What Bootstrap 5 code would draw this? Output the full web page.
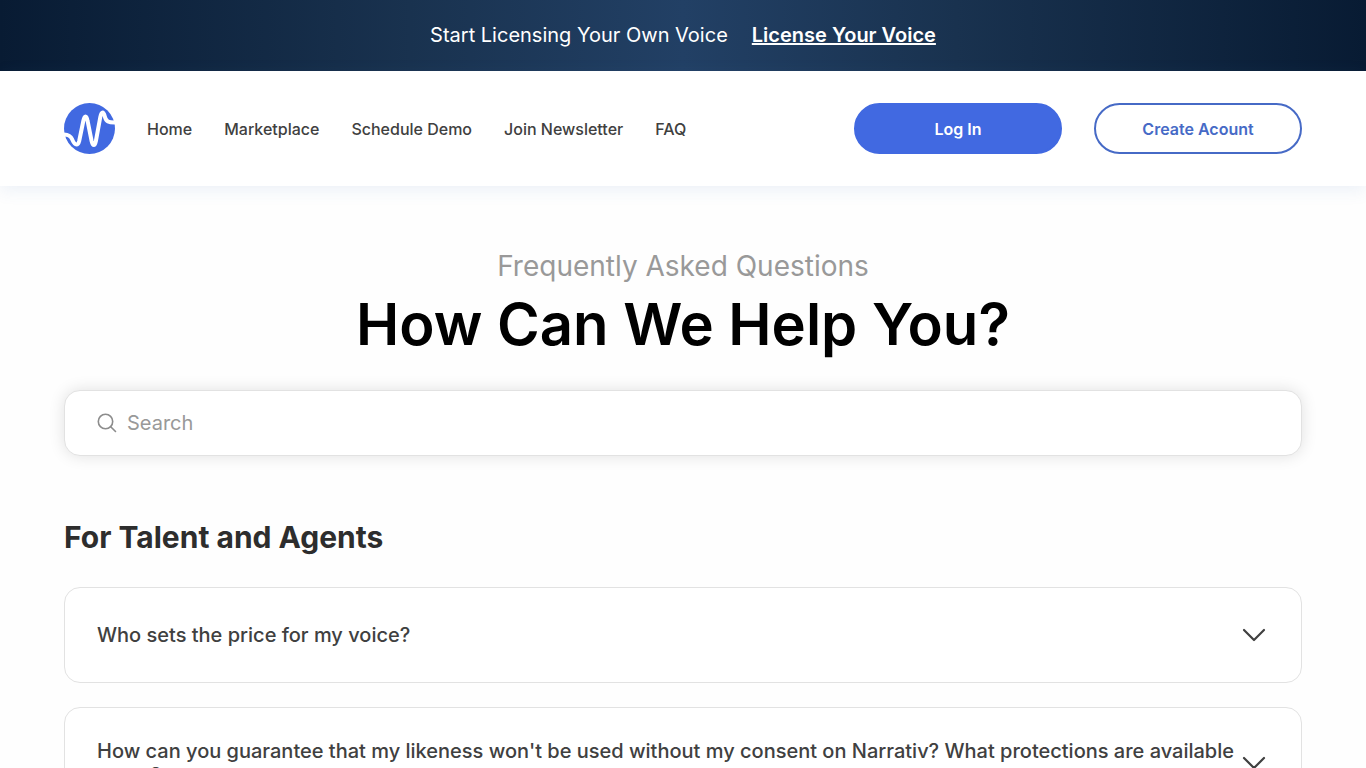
<!DOCTYPE html>
<html lang="en">
<head>
<meta charset="utf-8">
<meta name="viewport" content="width=device-width, initial-scale=1">
<title>Narrativ – FAQ</title>
<link href="https://cdn.jsdelivr.net/npm/bootstrap@5.3.0/dist/css/bootstrap.min.css" rel="stylesheet">
<style>
  body { font-family: Inter, "Liberation Sans", sans-serif; color: #404040; background: #fefefe; }
  .page-gutter { padding-left: 64px; padding-right: 64px; }
  .promo { background: linear-gradient(90deg, #081b33 0%, #19324f 30%, #224065 50%, #19324f 70%, #081b33 100%); padding: 23px 0 24px; font-size: 20px; line-height: 24px; }
  .site-header { background: #fff; padding-top: 32px; padding-bottom: 32px; box-shadow: 0 4px 16px rgba(65, 120, 190, .1); }
  .header-group { gap: 32px; }
  .site-header .nav-link { color: #404040; font-weight: 500; font-size: 16px; padding: 0; }
  .brand-logo { display: block; }
  .btn-pill { width: 208px; height: 51px; border: 2px solid #4169e1; border-radius: 26px; font-size: 16px; font-weight: 600; }
  .btn-login, .btn-login:hover { background: #4169e1; color: #fff; border-color: #4169e1; }
  .btn-create { color: #466ac6; border-color: #466ac6; }
  .hero { padding-top: 63px; padding-bottom: 30px; }
  .eyebrow { font-size: 28px; line-height: 34px; color: #999; }
  .hero-title { font-size: 58px; line-height: 72px; font-weight: 600; color: #000; margin-top: 5px; }
  .search-box { height: 66px; padding: 0 32px; gap: 8px; border: 1px solid #e2e2e2; border-radius: 16px; background: #fff; color: #999; box-shadow: 0 0 16px rgba(0, 0, 0, .12); }
  .search-box .form-control, .search-box .form-control:focus { font-size: 20px; line-height: 24px; padding: 0 2px; border: 0; background: none; box-shadow: none; }
  .search-box .form-control::placeholder { color: #999; opacity: 1; }
  .section-title { font-size: 30px; line-height: 36px; font-weight: 700; color: #2d2d2d; margin: 63px 0 32px; }
  .faq-item { border: 1px solid #e2e2e2; border-radius: 16px; background: #fff; }
  .faq-toggle { width: 100%; min-height: 94px; padding: 31px 32px; border: 0; background: none; color: #404040; font-size: 20px; line-height: 24px; font-weight: 500; text-align: left; }
</style>
</head>
<body>
<div class="promo d-flex flex-wrap justify-content-center align-items-center gap-4 text-white">
  <span>Start Licensing Your Own Voice</span>
  <a href="#" class="text-white fw-semibold">License Your Voice</a>
</div>

<header class="site-header page-gutter d-flex flex-wrap align-items-center justify-content-between gap-3">
  <nav class="header-group d-flex flex-wrap align-items-center" aria-label="Main">
    <a href="#" aria-label="Narrativ home">
      <svg class="brand-logo" width="51" height="51" viewBox="0 0 51 51" aria-hidden="true">
        <circle cx="25.500" cy="25.500" r="25.500" fill="#4169e1"/>
        <path d="M-2 31.500C4 31.500 6.500 32.500 8 36C9.500 39.500 10.500 41.500 12.500 41.500C14 41.500 14.700 40 15.200 38L19.300 18C20 14.500 20.600 13.500 21.500 13.500C22.400 13.500 23 14.500 23.600 18L27.600 38C28.300 41 28.800 42 29.800 42C30.800 42 31.300 41 31.900 38L36.300 14C37 10.500 37.500 9.500 38.600 9.500C39.800 9.500 40.200 11 40.800 13.500C42 18.500 44 20 53 19.500" fill="none" stroke="#fff" stroke-width="4" stroke-linecap="round"/>
      </svg>
    </a>
    <a class="nav-link" href="#">Home</a>
    <a class="nav-link" href="#">Marketplace</a>
    <a class="nav-link" href="#">Schedule Demo</a>
    <a class="nav-link" href="#">Join Newsletter</a>
    <a class="nav-link" href="#">FAQ</a>
  </nav>
  <div class="header-group d-flex flex-wrap">
    <button type="button" class="btn btn-pill btn-login">Log In</button>
    <button type="button" class="btn btn-pill btn-create">Create Acount</button>
  </div>
</header>

<main class="page-gutter pb-5">
  <div class="hero text-center">
    <p class="eyebrow mb-0">Frequently Asked Questions</p>
    <h1 class="hero-title mb-0">How Can We Help You?</h1>
  </div>

  <form class="search-box d-flex align-items-center" role="search">
    <svg width="20" height="20" viewBox="0 0 20 20" fill="none" stroke="#8c8c8c" stroke-width="1.600" stroke-linecap="round" class="flex-shrink-0" aria-hidden="true">
      <circle cx="8.500" cy="8.500" r="7.200"/><path d="M13.700 13.700L18.500 18.500"/>
    </svg>
    <input type="text" class="form-control" placeholder="Search" aria-label="Search">
  </form>

  <h2 class="section-title">For Talent and Agents</h2>

  <div class="d-grid gap-4">
    <div class="faq-item">
      <button type="button" class="faq-toggle d-flex align-items-center justify-content-between" aria-expanded="false">
        <span>Who sets the price for my voice?</span>
        <svg width="30" height="24" viewBox="0 0 30 24" fill="none" stroke="#404040" stroke-width="2.200" stroke-linecap="round" stroke-linejoin="round" class="flex-shrink-0" aria-hidden="true"><path d="M5 7L15 17L25 7"/></svg>
      </button>
    </div>
    <div class="faq-item">
      <button type="button" class="faq-toggle d-flex align-items-center justify-content-between" aria-expanded="false">
        <span>How can you guarantee that my likeness won't be used without my consent on Narrativ? What protections are available to me?</span>
        <svg width="30" height="24" viewBox="0 0 30 24" fill="none" stroke="#404040" stroke-width="2.200" stroke-linecap="round" stroke-linejoin="round" class="flex-shrink-0" aria-hidden="true"><path d="M5 7L15 17L25 7"/></svg>
      </button>
    </div>
  </div>
</main>
<script src="https://cdn.jsdelivr.net/npm/bootstrap@5.3.0/dist/js/bootstrap.bundle.min.js"></script>
</body>
</html>
